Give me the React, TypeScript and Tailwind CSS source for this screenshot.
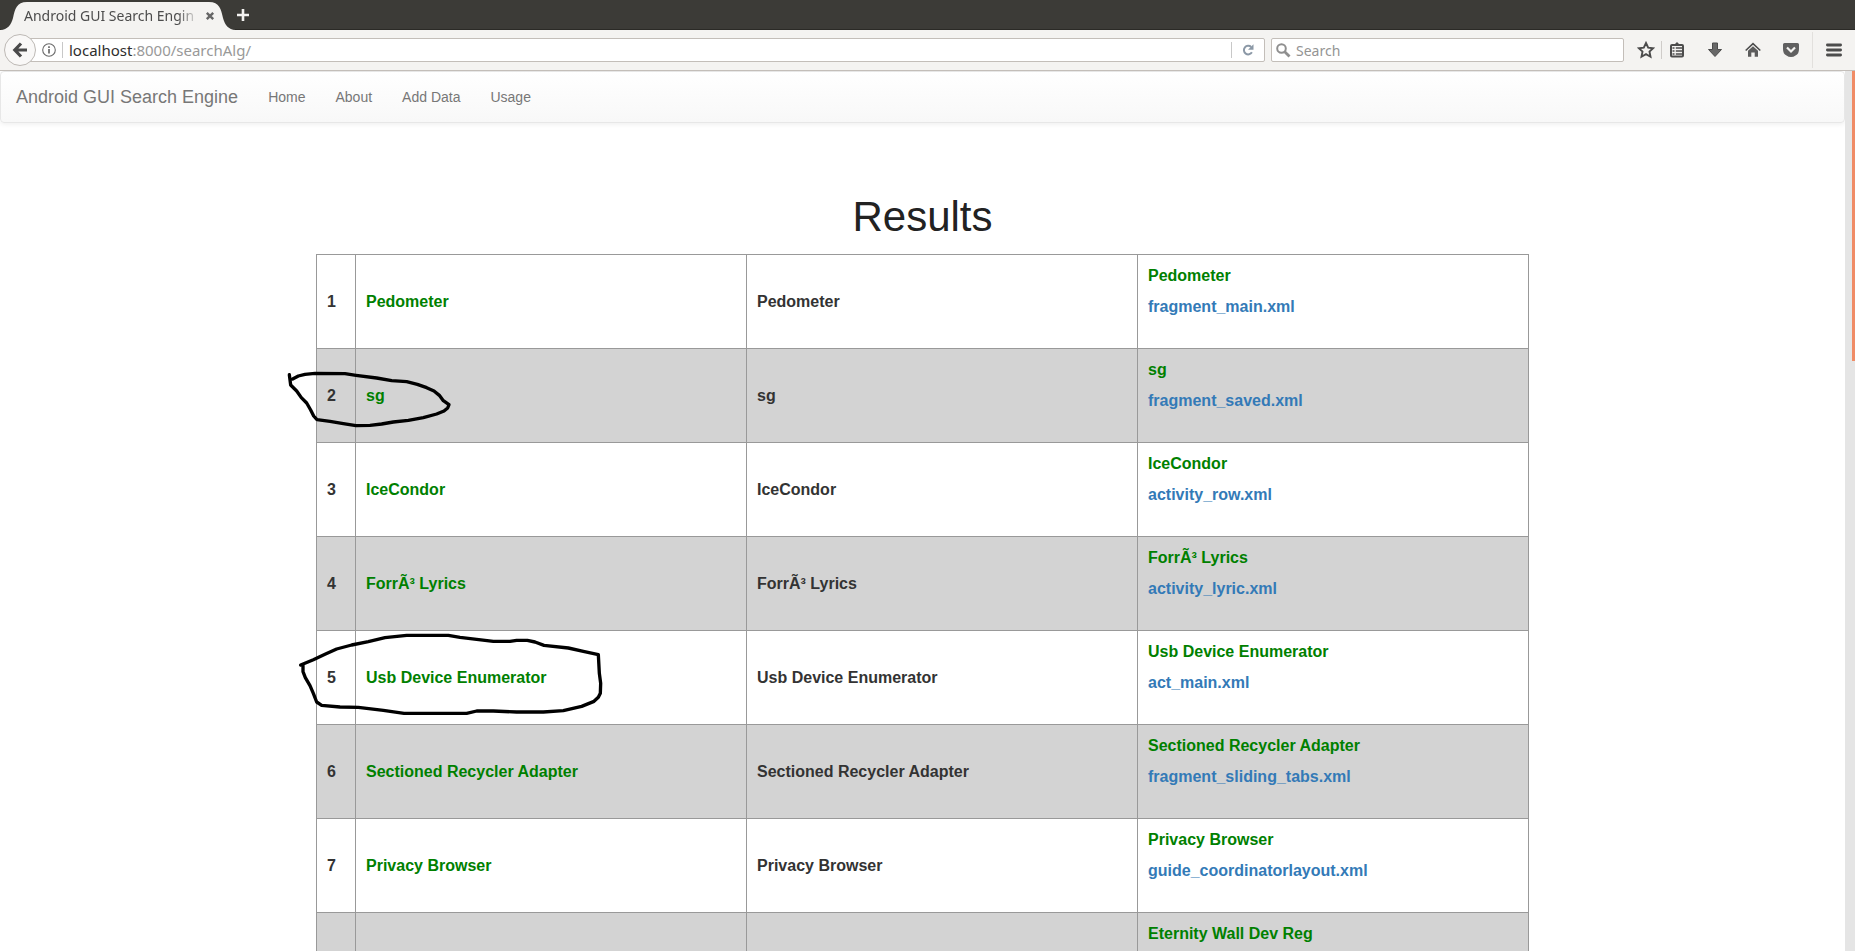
import React from "react";

type Result = { name: string; file?: string };

const results: Result[] = [
  { name: "Pedometer", file: "fragment_main.xml" },
  { name: "sg", file: "fragment_saved.xml" },
  { name: "IceCondor", file: "activity_row.xml" },
  { name: "ForrÃ³ Lyrics", file: "activity_lyric.xml" },
  { name: "Usb Device Enumerator", file: "act_main.xml" },
  { name: "Sectioned Recycler Adapter", file: "fragment_sliding_tabs.xml" },
  { name: "Privacy Browser", file: "guide_coordinatorlayout.xml" },
  { name: "Eternity Wall Dev Reg" },
];

function TabStrip() {
  return (
    <div className="flex h-[30px] shrink-0 items-stretch border-b border-[#2b2a26] bg-[#3c3b37]">
      <div className="relative h-[30px] w-[236px]">
        <svg className="absolute inset-0" width="236" height="30" viewBox="0 0 236 30" aria-hidden="true">
          <path
            d="M0 30C8 29.500 11 25 13 18C15 9 16.500 2 27 2H209C219.500 2 221 9 223 18C225 25 228 29.500 236 30Z"
            fill="#f4f3f1"
          />
        </svg>
        <div className="relative flex h-full items-center pt-px pl-6">
          <button className="w-[175px] text-left text-[14px] leading-5 whitespace-nowrap text-[#4c4c4c] [mask-image:linear-gradient(to_right,black_88%,transparent)]">
            Android GUI Search Engin
          </button>
          <button aria-label="Close tab" className="ml-[6px]">
            <svg width="10" height="10" viewBox="0 0 10 10" fill="none" stroke="#666" strokeWidth="2.400">
              <path d="M1.800 1.800L8.200 8.200M8.200 1.800L1.800 8.200" />
            </svg>
          </button>
        </div>
      </div>
      <button aria-label="New tab" className="flex w-[14px] items-center justify-center">
        <svg width="14" height="14" viewBox="0 0 14 14" fill="none" stroke="#f4f3f1" strokeWidth="2.600" className="shrink-0">
          <path d="M7 1V13M1 7H13" />
        </svg>
      </button>
    </div>
  );
}

function AddressBar() {
  return (
    <div className="flex h-10 shrink-0 items-center bg-[#f4f3f1] pl-1">
      <button
        aria-label="Back"
        className="relative z-10 flex size-8 shrink-0 items-center justify-center rounded-full border border-[#bdb9b5] bg-[#f9f8f7]"
      >
        <svg width="16" height="16" viewBox="0 0 16 16" fill="none" stroke="#4a4a4a" strokeWidth="3.200">
          <path d="M9 1.500L2.800 8L9 14.500M3 8H15" />
        </svg>
      </button>
      <div className="-ml-2 flex h-6 min-w-0 flex-1 items-center rounded-r-[2px] border border-[#c3beb9] bg-white pl-[13px]">
        <svg width="14" height="14" viewBox="0 0 14 14" fill="none" stroke="#6a6a6a" className="shrink-0">
          <circle cx="7" cy="7" r="6.300" strokeWidth="1.100" />
          <path d="M7 6V10.500M7 3.200V4.900" strokeWidth="1.700" />
        </svg>
        <span className="mx-[6px] h-4 w-px bg-[#c8c8c8]" />
        <a href="#address" className="flex-1 text-[15px] leading-5 text-[#999]">
          <span className="text-[#2e2e2e]">localhost</span>:8000/searchAlg/
        </a>
        <span className="h-4 w-px bg-[#c8c8c8]" />
        <button aria-label="Reload" className="flex w-8 items-center justify-center">
          <svg width="12" height="12" viewBox="0 0 12 12" fill="none">
            <path d="M9.200 3A4.300 4.300 0 1 0 9.900 8.300" stroke="#8b98a6" strokeWidth="2" />
            <path d="M11.500 .3V5.800H6Z" fill="#8b98a6" />
          </svg>
        </button>
      </div>
      <label className="ml-[6px] flex h-6 w-[353px] items-center rounded-[2px] border border-[#c3beb9] bg-white pl-1">
        <svg width="15" height="15" viewBox="0 0 15 15" fill="none" stroke="#8f8f8f" className="shrink-0">
          <circle cx="5.500" cy="5.500" r="4.300" strokeWidth="2" />
          <path d="M8.700 8.700L13.500 13.500" strokeWidth="2.800" />
        </svg>
        <input
          aria-label="Search"
          placeholder="Search"
          className="ml-[5px] min-w-0 flex-1 bg-transparent pt-px text-[14px] leading-5 outline-none placeholder:text-[#949494]"
        />
      </label>
      <button aria-label="Bookmark this page" className="ml-[13px]">
        <svg width="18" height="18" viewBox="0 0 18 18" fill="none" stroke="#4c4c4c" strokeWidth="1.900">
          <path d="M9 2L11.200 6.600L16.200 7.200L12.500 10.600L13.500 15.700L9 13.100L4.500 15.700L5.500 10.600L1.800 7.200L6.800 6.600Z" />
        </svg>
      </button>
      <span className="ml-[6px] h-[18px] w-px bg-[#cfccc9]" />
      <button aria-label="Show bookmarks" className="ml-[7px]">
        <svg width="16" height="16" viewBox="0 0 16 16" fill="none">
          <path d="M8 0L11 3H5Z" fill="#4c4c4c" />
          <rect x="2" y="3" width="12" height="11.500" rx="1" stroke="#4c4c4c" strokeWidth="2" />
          <path d="M3.500 6H5.500M6.800 6H13M3.500 9H5.500M6.800 9H13M3.500 12H5.500M6.800 12H13" stroke="#4c4c4c" strokeWidth="1.300" />
        </svg>
      </button>
      <button aria-label="Downloads" className="ml-[22px]">
        <svg width="16" height="16" viewBox="0 0 16 16">
          <path d="M5.500 1H10.500V7.500H14.500L8 14.500L1.500 7.500H5.500Z" fill="#686868" stroke="#4c4c4c" />
        </svg>
      </button>
      <button aria-label="Home page" className="ml-[22px]">
        <svg width="16" height="16" viewBox="0 0 16 16" fill="none">
          <path d="M.7 8.500L8 1.700L15.300 8.500" stroke="#4c4c4c" strokeWidth="1.600" />
          <path d="M3 8.800L8 4.200L13 8.800V14.800H9.700V10.500H6.300V14.800H3Z" fill="#5c5c5c" />
        </svg>
      </button>
      <button aria-label="Save to Pocket" className="ml-[22px]">
        <svg width="16" height="16" viewBox="0 0 16 16" fill="none">
          <path d="M0 2.500Q0 1 1.500 1H14.500Q16 1 16 2.500V7Q16 12 12.500 13.500Q10.500 15 8 15Q5.500 15 3.500 13.500Q0 12 0 7Z" fill="#606060" />
          <path d="M4 5.500L8 9.500L12 5.500" stroke="#f4f3f1" strokeWidth="2.200" />
        </svg>
      </button>
      <span className="ml-[13px] h-9 w-px bg-[#e2e0dd]" />
      <button aria-label="Open menu" className="mr-[13px] ml-[13px]">
        <svg width="16" height="14" viewBox="0 0 16 14" fill="none" stroke="#4c4c4c" strokeWidth="2.800" strokeLinecap="round">
          <path d="M1.400 2H14.600M1.400 7H14.600M1.400 12H14.600" />
        </svg>
      </button>
    </div>
  );
}

function Navbar() {
  return (
    <nav className="flex h-[52px] items-center rounded-[4px] border border-[#e7e7e7] bg-linear-to-b from-white to-[#f8f8f8] text-[#777] shadow-[0_1px_5px_rgba(0,0,0,0.075)]">
      <a href="#top" className="px-[15px] text-[18px] leading-5">
        Android GUI Search Engine
      </a>
      <div className="flex text-[14px] leading-5">
        {["Home", "About", "Add Data", "Usage"].map((item) => (
          <a key={item} href={"#" + item} className="px-[15px]">
            {item}
          </a>
        ))}
      </div>
    </nav>
  );
}

function PenMarks() {
  return (
    <svg
      className="pointer-events-none absolute top-[106px] -left-9"
      width="340"
      height="370"
      viewBox="0 0 1020 1110"
      fill="none"
      stroke="#000"
      strokeWidth="10"
      strokeLinejoin="round"
      strokeLinecap="round"
      aria-hidden="true"
    >
      <path d="M28 44L32 75L50 93L64 113L80 129L92 150L101 168L111 179L150 184L190 191L228 197L270 196L305 192L340 186L385 181L430 173L470 162L492 153L503 144L507 134L490 122L478 106L462 93L440 83L412 73L380 65L335 62L290 54L228 46L195 41L105 40L75 43L55 48L38 57" />
      <path d="M62 915L100 899L135 883L170 867L215 855L265 845L315 833L380 826L505 826L540 832L590 838L640 844L690 844L710 841L742 841L765 846L792 856L865 864L910 874L955 884L958 940L962 970L961 1000L955 1012L942 1024L905 1039L850 1052L790 1056H710L640 1053H590L560 1060H372L310 1051L235 1042L180 1041L125 1036L110 1026L100 1000L90 977L76 953L69 935V916Z" />
    </svg>
  );
}

const cell = "border border-[#999] px-[10px] text-left";

function ResultsTable() {
  return (
    <div className="relative mx-auto w-full max-w-[1213px]">
      <table className="w-full table-fixed border-collapse text-[16px] leading-[22px] font-bold text-[#333]">
        <colgroup>
          <col className="w-[39px]" />
          <col />
          <col />
          <col />
        </colgroup>
        <tbody>
          {results.map((r, i) => (
            <tr key={r.name} className="h-[94px] even:bg-[#d3d3d3]">
              <th className={cell}>{r.file && i + 1}</th>
              <td className={cell + " text-[#008000]"}>{r.file && r.name}</td>
              <td className={cell}>{r.file && r.name}</td>
              <td className={cell + " pt-[10px] align-top"}>
                <p className="text-[#008000]">{r.name}</p>
                {r.file && (
                  <a href={"#" + r.file} className="mt-[9px] block text-[#337ab7]">
                    {r.file}
                  </a>
                )}
              </td>
            </tr>
          ))}
        </tbody>
      </table>
      <PenMarks />
    </div>
  );
}

export default function App() {
  return (
    <div className="flex h-screen flex-col overflow-hidden bg-white font-['Noto_Sans',sans-serif]">
      <TabStrip />
      <AddressBar />
      <div className="flex min-h-0 flex-1 border-t border-[#c3beb9]">
        <main className="min-w-0 flex-1 overflow-hidden font-['Liberation_Sans',Arial,sans-serif]">
          <Navbar />
          <h1 className="mt-[71px] mb-[14px] text-center text-[42px] leading-[46px] text-[#222]">Results</h1>
          <ResultsTable />
        </main>
        <div className="flex w-[10px] justify-end bg-[#e5e5e5]">
          <div className="h-[33%] w-[3px] bg-[#f08c66]" />
        </div>
      </div>
    </div>
  );
}
